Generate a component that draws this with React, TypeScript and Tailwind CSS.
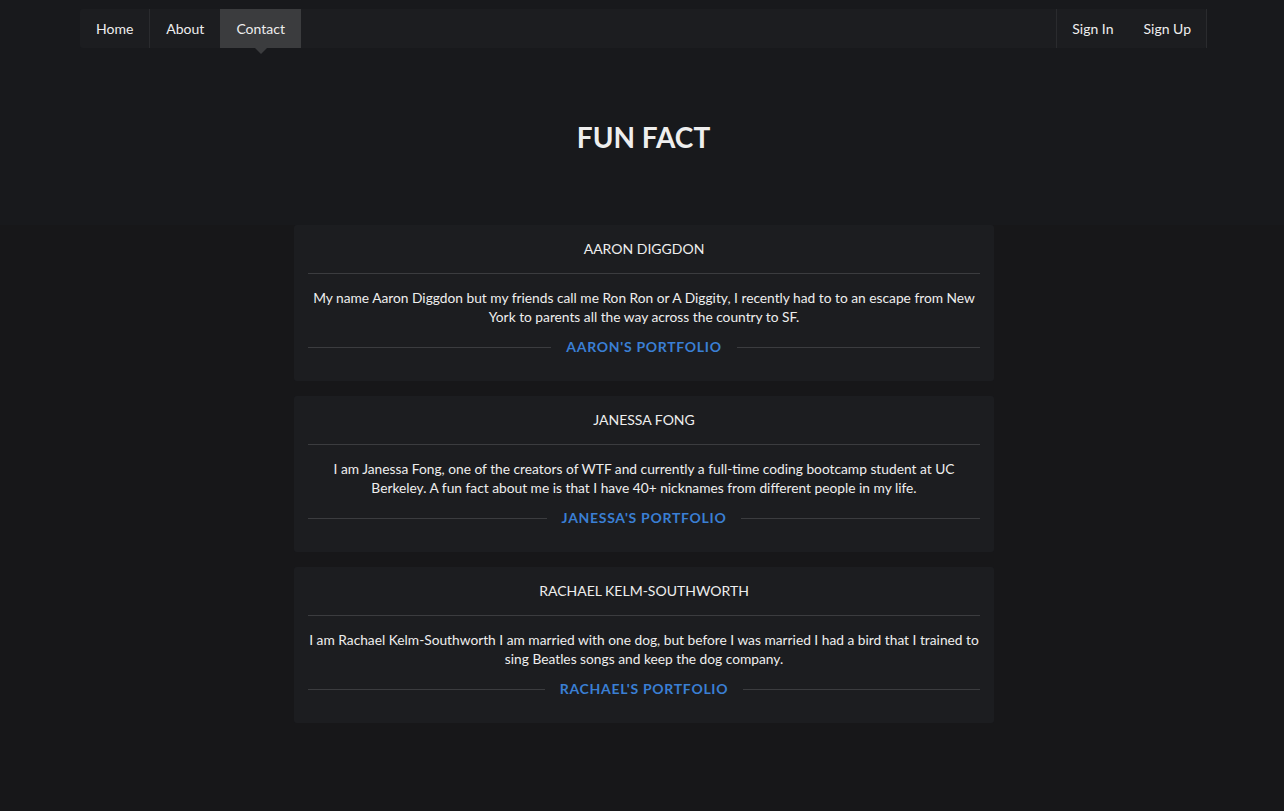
const people = [
  {
    name: 'Aaron Diggdon',
    text: 'My name Aaron Diggdon but my friends call me Ron Ron or A Diggity, I recently had to to an escape from New York to parents all the way across the country to SF.',
    link: "Aaron's Portfolio",
  },
  {
    name: 'Janessa Fong',
    text: 'I am Janessa Fong, one of the creators of WTF and currently a full-time coding bootcamp student at UC Berkeley. A fun fact about me is that I have 40+ nicknames from different people in my life.',
    link: "Janessa's Portfolio",
  },
  {
    name: 'Rachael Kelm-Southworth',
    text: 'I am Rachael Kelm-Southworth I am married with one dog, but before I was married I had a bird that I trained to sing Beatles songs and keep the dog company.',
    link: "Rachael's Portfolio",
  },
];

function NavItem({ label, active, border, pad }: { label: string; active?: boolean; border?: string; pad?: string }) {
  return (
    <a
      href="#"
      className={`relative flex h-full items-center ${pad ?? 'px-4'} text-[14px] text-[#eeeeee] ${border ?? ''} ${
        active ? 'bg-[#3b3c3e]' : ''
      }`}
    >
      {label}
      {active && (
        <span className="absolute left-1/2 top-full -ml-[6px] h-0 w-0 border-x-[6px] border-t-[6px] border-x-transparent border-t-[#3b3c3e]" />
      )}
    </a>
  );
}

export default function App() {
  return (
    <div
      className="min-h-[811px] bg-[#171719] pl-[4px] text-[#eeeeee]"
      style={{ fontFamily: 'Lato, "Open Sans", sans-serif' }}
    >
      {/* Header */}
      <div className="-ml-[4px] bg-[#18191c] pt-[9px] pl-[3px]">
        <nav className="mx-auto flex h-[39px] w-[1127px] items-stretch justify-between rounded-[3px] bg-[#1c1d20]">
          <div className="flex">
            <NavItem label="Home" border="border-r border-[#2a2b2e]" />
            <NavItem label="About" />
            <NavItem label="Contact" active />
          </div>
          <div className="flex border-l border-r border-[#2a2b2e]">
            <NavItem label="Sign In" pad="px-[15px]" />
            <NavItem label="Sign Up" pad="px-[15px]" />
          </div>
        </nav>
        <h1 className="pt-[70px] pb-[69px] text-center text-[28px] font-bold leading-[38px] text-[#eeeeee]">
          FUN FACT
        </h1>
      </div>

      {/* Cards */}
      <div className="mx-auto flex w-[700px] flex-col gap-[15px] pb-[80px]">
        {people.map((p) => (
          <div key={p.name} className="rounded-[3px] bg-[#1c1d20] px-[14px] pt-[14px] pb-[24px] text-center">
            <h3 className="text-[14px] uppercase leading-[20px] text-[#eeeeee]">{p.name}</h3>
            <hr className="mt-[14px] border-t border-[#3b3c3f]" />
            <p className="mt-[14px] text-[13.75px] leading-[19px] text-[#eeeeee]">{p.text}</p>
            <div className="mt-[11px] flex items-center gap-[15px]">
              <div className="h-px flex-1 bg-[#3b3c3f]" />
              <a href="#" className="text-[14px] font-bold uppercase leading-[20px] tracking-[0.7px] text-[#3a7fd4]">
                {p.link}
              </a>
              <div className="h-px flex-1 bg-[#3b3c3f]" />
            </div>
          </div>
        ))}
      </div>
    </div>
  );
}
